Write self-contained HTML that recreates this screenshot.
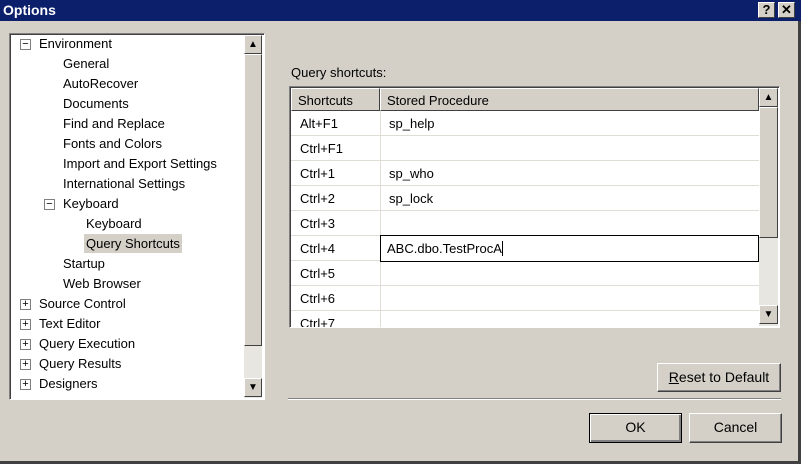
<!DOCTYPE html>
<html><head><style>
*{box-sizing:border-box;margin:0;padding:0}
body{width:801px;height:464px;background:#d4d0c8;font-family:"Liberation Sans",sans-serif;font-size:13px;color:#000;position:relative;overflow:hidden}
.a{position:absolute}
.title{left:0;top:0;width:801px;height:21px;background:#0c1f6b;color:#fff;font-weight:bold;font-size:14px;padding:2px 0 0 3px}
.tb{top:2px;width:17px;height:16px;background:#d4d0c8;border:1px solid;border-color:#fff #404040 #404040 #fff;font-weight:bold;font-size:13px;text-align:center;line-height:14px;color:#000}
.sunk{border:1px solid;border-color:#808080 #fff #fff #808080;box-shadow:inset 1px 1px 0 #404040}
.t{position:absolute;white-space:nowrap}
.pm{position:absolute;width:11px;height:11px;border:1px solid #808080;background:#fff;font-size:11px;line-height:9px;text-align:center;color:#000}
.btn{position:absolute;background:#d4d0c8;border:1px solid;border-color:#fff #404040 #404040 #fff;box-shadow:inset -1px -1px 0 #808080;text-align:center;font-size:14px}
.arr{position:absolute;width:18px;height:19px;background:#d4d0c8;border:1px solid;border-color:#fff #404040 #404040 #fff;font-size:10px;text-align:center;line-height:17px}
.row{position:absolute;left:0;width:469px;height:25px;border-bottom:1px solid #e0ddd6;background:#fff}
.row span{position:absolute;top:5px}
</style></head><body>
<div class="a title">Options</div>
<div class="a tb" style="left:758px">?</div>
<div class="a tb" style="left:778px">✕</div>

<div class="a sunk" style="left:9px;top:33px;width:256px;height:367px;background:#fff">
 <div class="pm" style="left:10px;top:5px">−</div>
 <div class="t" style="left:29px;top:2px">Environment</div>
 <div class="t" style="left:53px;top:22px">General</div>
 <div class="t" style="left:53px;top:42px">AutoRecover</div>
 <div class="t" style="left:53px;top:62px">Documents</div>
 <div class="t" style="left:53px;top:82px">Find and Replace</div>
 <div class="t" style="left:53px;top:102px">Fonts and Colors</div>
 <div class="t" style="left:53px;top:122px">Import and Export Settings</div>
 <div class="t" style="left:53px;top:142px">International Settings</div>
 <div class="pm" style="left:34px;top:165px">−</div>
 <div class="t" style="left:53px;top:162px">Keyboard</div>
 <div class="t" style="left:76px;top:182px">Keyboard</div>
 <div class="t" style="left:74px;top:200px;background:#d4d0c8;padding:2px 2px">Query Shortcuts</div>
 <div class="t" style="left:53px;top:222px">Startup</div>
 <div class="t" style="left:53px;top:242px">Web Browser</div>
 <div class="pm" style="left:10px;top:265px">+</div><div class="t" style="left:29px;top:262px">Source Control</div>
 <div class="pm" style="left:10px;top:285px">+</div><div class="t" style="left:29px;top:282px">Text Editor</div>
 <div class="pm" style="left:10px;top:305px">+</div><div class="t" style="left:29px;top:302px">Query Execution</div>
 <div class="pm" style="left:10px;top:325px">+</div><div class="t" style="left:29px;top:322px">Query Results</div>
 <div class="pm" style="left:10px;top:345px">+</div><div class="t" style="left:29px;top:342px">Designers</div>
 <div class="a" style="left:234px;top:1px;width:18px;height:363px;background:#e8e6e0"></div>
 <div class="arr" style="left:234px;top:1px">▲</div>
 <div class="a" style="left:234px;top:20px;width:18px;height:292px;background:#d4d0c8;border:1px solid;border-color:#fff #404040 #404040 #fff"></div>
 <div class="arr" style="left:234px;top:344px">▼</div>
</div>

<div class="t" style="left:291px;top:65px">Query shortcuts:</div>
<div class="a sunk" style="left:289px;top:86px;width:491px;height:242px;background:#fff;overflow:hidden">
 <div class="a" style="left:1px;top:1px;width:89px;height:23px;background:#d4d0c8;border:1px solid;border-color:#fff #404040 #404040 #fff"><span class="t" style="left:6px;top:4px">Shortcuts</span></div>
 <div class="a" style="left:90px;top:1px;width:379px;height:23px;background:#d4d0c8;border:1px solid;border-color:#fff #404040 #404040 #fff"><span class="t" style="left:6px;top:4px">Stored Procedure</span></div>
 <div class="a" style="left:1px;top:24px;width:468px;height:220px">
  <div class="row" style="top:0"><span style="left:9px">Alt+F1</span><span style="left:98px">sp_help</span></div>
  <div class="row" style="top:25px"><span style="left:9px">Ctrl+F1</span></div>
  <div class="row" style="top:50px"><span style="left:9px">Ctrl+1</span><span style="left:98px">sp_who</span></div>
  <div class="row" style="top:75px"><span style="left:9px">Ctrl+2</span><span style="left:98px">sp_lock</span></div>
  <div class="row" style="top:100px"><span style="left:9px">Ctrl+3</span></div>
  <div class="row" style="top:125px"><span style="left:9px">Ctrl+4</span></div>
  <div class="row" style="top:150px"><span style="left:9px">Ctrl+5</span></div>
  <div class="row" style="top:175px"><span style="left:9px">Ctrl+6</span></div>
  <div class="row" style="top:200px"><span style="left:9px">Ctrl+7</span></div>
  <div class="a" style="left:89px;top:0;width:1px;height:220px;background:#e0ddd6"></div>
  <div class="a" style="left:89px;top:124px;width:379px;height:27px;border:1px solid #000;background:#fff"><span class="t" style="left:6px;top:5px">ABC.dbo.TestProcA<span style="display:inline-block;width:1px;height:15px;background:#000;vertical-align:-3px"></span></span></div>
 </div>
 <div class="a" style="left:469px;top:1px;width:19px;height:238px;background:#e8e6e0"></div>
 <div class="arr" style="left:469px;top:1px;width:19px">▲</div>
 <div class="a" style="left:469px;top:20px;width:19px;height:131px;background:#d4d0c8;border:1px solid;border-color:#fff #404040 #404040 #fff"></div>
 <div class="arr" style="left:469px;top:218px;width:19px">▼</div>
</div>

<div class="btn" style="left:657px;top:363px;width:124px;height:29px;line-height:26px"><u>R</u>eset to Default</div>
<div class="a" style="left:288px;top:398px;width:493px;height:2px;border-top:1px solid #808080;border-bottom:1px solid #fff"></div>
<div class="btn" style="left:589px;top:413px;width:93px;height:30px;line-height:27px;border:1px solid #000;box-shadow:inset 1px 1px 0 #fff,inset -2px -2px 0 #808080">OK</div>
<div class="btn" style="left:689px;top:413px;width:93px;height:30px;line-height:27px">Cancel</div>
<div class="a" style="left:0;top:461px;width:801px;height:3px;background:#404040"></div>
<div class="a" style="left:798px;top:21px;width:3px;height:443px;background:#404040"></div>
</body></html>
